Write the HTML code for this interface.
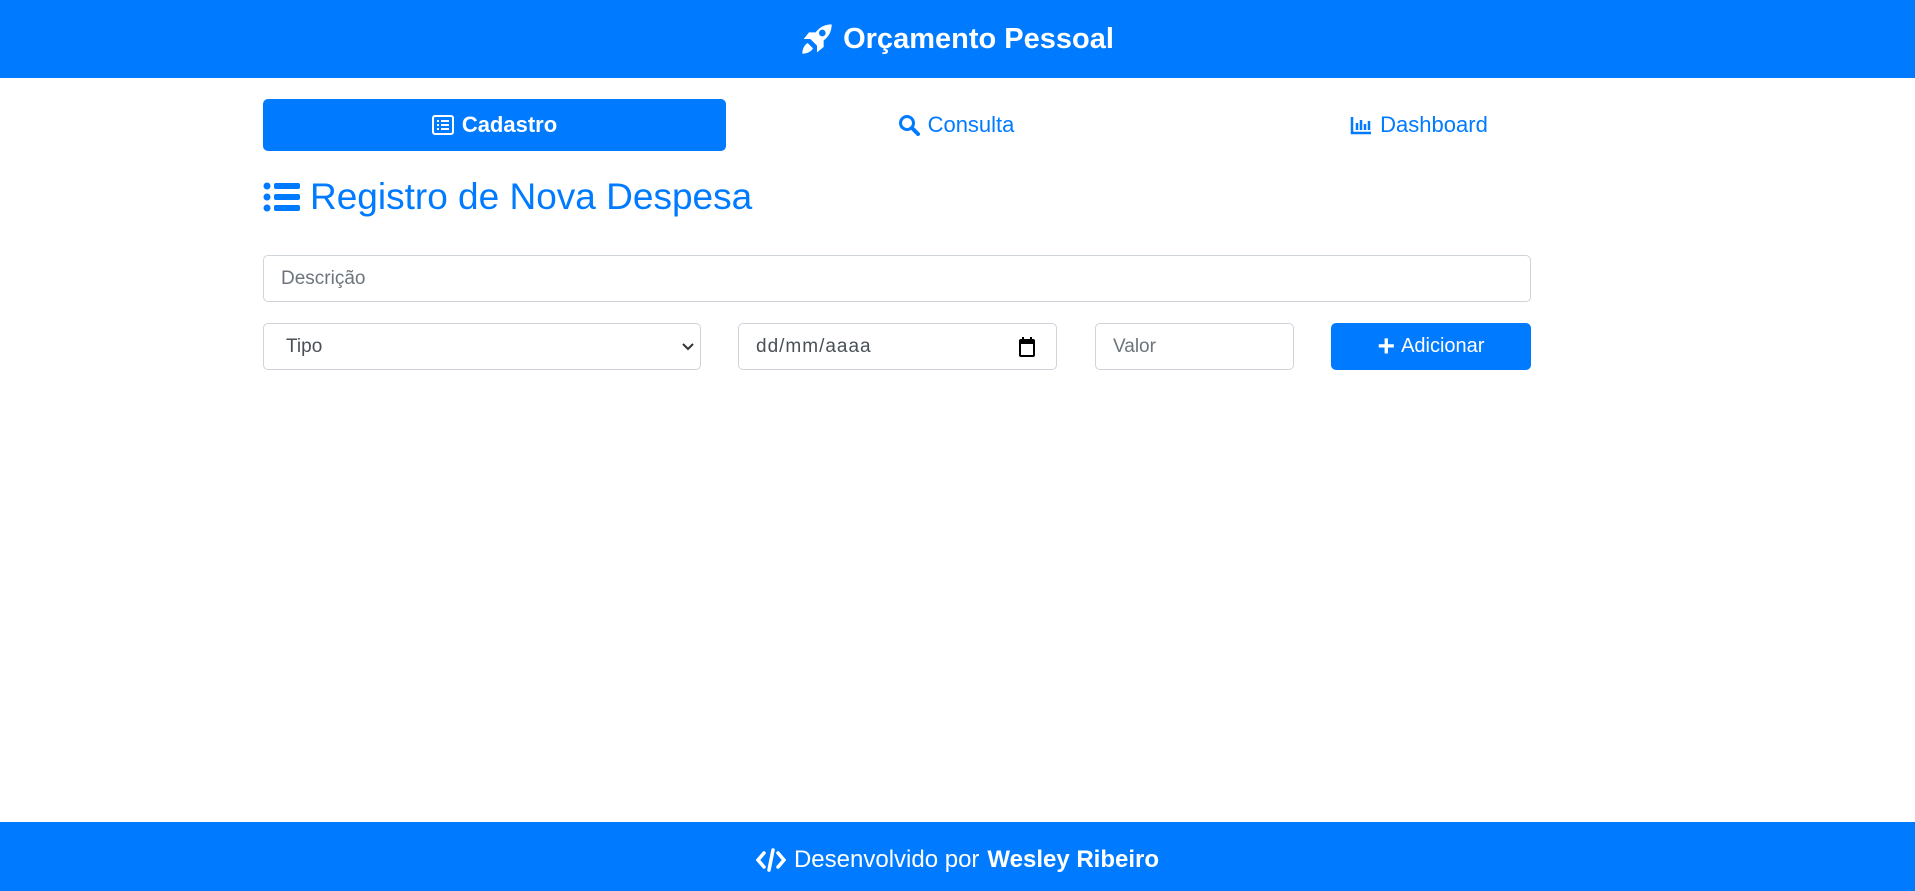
<!DOCTYPE html>
<html><head><meta charset="utf-8"><style>
*{box-sizing:border-box;margin:0;padding:0}
body{width:1915px;height:891px;position:relative;background:#fff;font-family:"Liberation Sans",sans-serif;overflow:hidden}
.hdr{position:absolute;left:0;top:0;width:1915px;height:78px;background:#007bff;color:#fff;display:flex;align-items:center;justify-content:center;font-size:29px;font-weight:bold;gap:10px;padding-top:0}
.ftr{position:absolute;left:0;top:822px;width:1915px;height:69px;background:#007bff;color:#fff;display:flex;align-items:center;justify-content:center;font-size:24px;gap:8px;padding-top:6px}
.nav{position:absolute;top:99px;height:52px;display:flex;align-items:center;justify-content:center;font-size:22px;color:#007bff;gap:8px;border-radius:5px}
.act{background:#007bff;color:#fff;font-weight:bold}
h1{position:absolute;left:263px;top:176px;font-size:37px;font-weight:normal;color:#007bff;display:flex;align-items:center;gap:10px}
.in{position:absolute;border:1px solid #ced4da;border-radius:5px;height:47px;display:flex;align-items:center;padding-left:17px;font-size:19px;color:#6c757d;background:#fff}
.btn{position:absolute;left:1331px;top:323px;width:200px;height:47px;background:#007bff;border-radius:5px;color:#fff;font-size:20px;display:flex;align-items:center;justify-content:center;gap:6px}
</style></head><body>
<div class="hdr"><svg width="32" height="32" viewBox="0 0 24 24"><path fill="#fff" d="M23 1c-5 0-9 2-12 6H6l-4 5h5l5 5v5l5-4v-5c4-3 6-7 6-12zM16 5a2.5 2.5 0 1 1 0 5 2.5 2.5 0 0 1 0-5zM5 15c-2 1-4 4-4 8 4 0 7-2 8-4z"/></svg>Orçamento Pessoal</div>
<div class="nav act" style="left:263px;width:463px"><svg width="22" height="20" viewBox="0 0 22 20"><rect x="1" y="1" width="20" height="18" rx="2" fill="none" stroke="#fff" stroke-width="2"/><path d="M5 6h2M5 10h2M5 14h2M9 6h8M9 10h8M9 14h8" stroke="#fff" stroke-width="2"/></svg>Cadastro</div>
<div class="nav" style="left:856px;width:200px"><svg width="22" height="22" viewBox="0 0 22 22"><circle cx="9" cy="9" r="6.5" fill="none" stroke="#007bff" stroke-width="3"/><path d="M14 14l6 6" stroke="#007bff" stroke-width="4" stroke-linecap="round"/></svg>Consulta</div>
<div class="nav" style="left:1319px;width:200px"><svg width="22" height="20" viewBox="0 0 22 20"><path d="M2 2v16h19" fill="none" stroke="#007bff" stroke-width="2.5"/><path d="M7 8v7M11 5v10M15 9v6M19 6v9" stroke="#007bff" stroke-width="2.5"/></svg>Dashboard</div>
<h1><svg width="37" height="30" viewBox="0 0 37 30"><g fill="#007bff"><circle cx="4" cy="4" r="3.5"/><circle cx="4" cy="15" r="3.5"/><circle cx="4" cy="26" r="3.5"/><rect x="11" y="1" width="26" height="6" rx="2"/><rect x="11" y="12" width="26" height="6" rx="2"/><rect x="11" y="23" width="26" height="6" rx="2"/></g></svg>Registro de Nova Despesa</h1>
<div class="in" style="left:263px;top:255px;width:1268px">Descrição</div>
<div class="in" style="left:263px;top:323px;width:438px;color:#495057;padding-left:22px">Tipo<svg style="position:absolute;right:6px;top:18px" width="12" height="10" viewBox="0 0 12 10"><path d="M1 2l5 5 5-5" fill="none" stroke="#333" stroke-width="2"/></svg></div>
<div class="in" style="left:738px;top:323px;width:319px;color:#495057;letter-spacing:1px">dd/mm/aaaa<svg style="position:absolute;right:20px;top:12px" width="18" height="22" viewBox="0 0 18 22"><rect x="2" y="4" width="14" height="16" rx="1" fill="none" stroke="#000" stroke-width="2"/><rect x="2" y="4" width="14" height="4" fill="#000"/><path d="M5 1v4M13 1v4" stroke="#000" stroke-width="2"/></svg></div>
<div class="in" style="left:1095px;top:323px;width:199px">Valor</div>
<div class="btn"><span style="font-size:30px;font-weight:bold;line-height:1">+</span>Adicionar</div>
<div class="ftr"><svg width="30" height="24" viewBox="0 0 30 24"><path d="M8 5L2 12l6 7M22 5l6 7-6 7M17 2l-4 20" fill="none" stroke="#fff" stroke-width="3.5" stroke-linecap="round"/></svg>Desenvolvido por <b>Wesley Ribeiro</b></div>
</body></html>
